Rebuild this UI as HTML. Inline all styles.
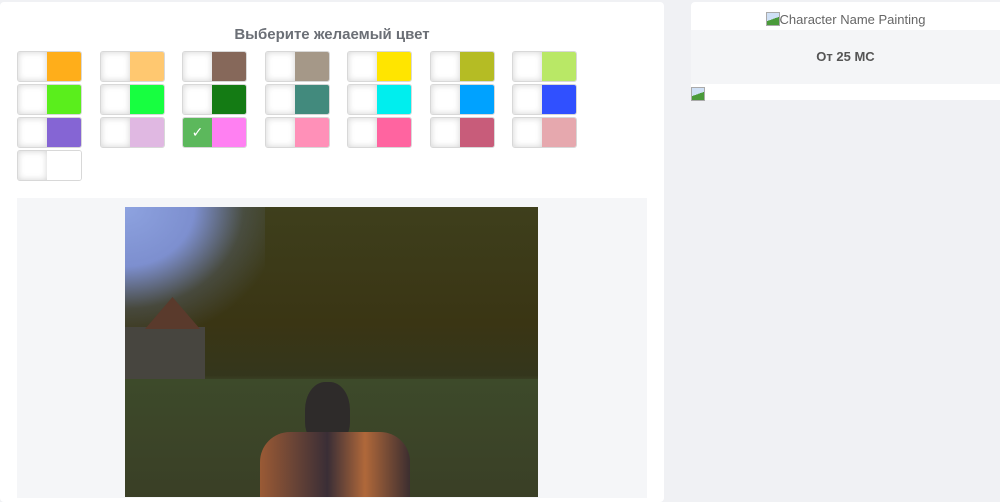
<!DOCTYPE html>
<html><head><meta charset="utf-8"><style>
*{margin:0;padding:0;box-sizing:border-box}
body{width:1000px;height:497px;overflow:hidden;background:#f0f1f4;font-family:"Liberation Sans","DejaVu Sans",sans-serif;position:relative}
.left{position:absolute;left:0;top:2px;width:664px;height:500px;background:#fff;border-radius:4px}
h2{position:absolute;top:24px;left:0;width:664px;text-align:center;font-size:15px;font-weight:bold;color:#6b6f76}
.sw{position:absolute;width:65px;height:31px;border:1px solid #d8d8d8;border-radius:3px;overflow:hidden;background:#fff}
.sw .w{position:absolute;left:0;top:0;width:29px;height:100%;box-shadow:inset 0 0 7px rgba(0,0,0,.18);background:#fff}
.sw .c{position:absolute;left:29px;top:0;right:0;height:100%}
.imgbox{position:absolute;left:17px;top:198px;width:630px;height:300px;background:#f5f6f8}
.pic{position:absolute;left:125px;top:207px;width:413px;height:290px;overflow:hidden;
background:linear-gradient(180deg,#3e3f1c 0%,#3a3514 40%,#34361c 58%,#3b4326 60%,#3a4226 100%)}
.card{position:absolute;left:691px;top:2px;width:309px;height:98px;background:#fff;border-radius:4px 0 0 4px}
.card .t{position:absolute;top:10px;width:100%;text-align:center;font-size:13px;color:#666}
.card .g{position:absolute;top:28px;left:0;width:100%;height:54px;background:#f4f5f7;text-align:center;line-height:54px;font-size:13px;font-weight:bold;color:#555}
.bi{display:inline-block;width:14px;height:14px;border:1px solid #aaa;background:linear-gradient(160deg,#cfe0f5 50%,#4a9a3a 50%);vertical-align:-2px}
</style></head><body>
<div class="left">
<h2>Выберите желаемый цвет</h2>
</div>
<div id="s"></div>
<div class="imgbox"></div>
<div class="pic">
 <div style="position:absolute;left:0;top:0;width:140px;height:120px;background:radial-gradient(ellipse at 0% 0%,#8ea3e0 0%,#7d8fcf 35%,rgba(90,100,120,.4) 60%,transparent 80%)"></div>
 <div style="position:absolute;left:0;top:120px;width:80px;height:70px;background:#47453f"></div>
 <div style="position:absolute;left:20px;top:90px;width:55px;height:32px;background:#5a3a2c;clip-path:polygon(50% 0,100% 100%,0 100%)"></div>
 <div style="position:absolute;left:0;top:172px;width:413px;height:118px;background:linear-gradient(180deg,#3d4a2a,#3a3f26)"></div>
 <div style="position:absolute;left:180px;top:175px;width:45px;height:62px;border-radius:45% 45% 35% 35%;background:#2e2b2a"></div>
 <div style="position:absolute;left:135px;top:225px;width:150px;height:70px;border-radius:30px 30px 0 0;background:linear-gradient(90deg,#9a5a35,#3a2e36 45%,#b0683a 70%,#3c2e30)"></div>
</div>
<div class="card">
 <div class="t"><span class="bi"></span>Character Name Painting</div>
 <div class="g">От 25 МС</div>
 <div style="position:absolute;left:0;top:84px"><span class="bi"></span></div>
</div>
<script>
var cols=[["#ffae1a","#ffc870","#86685a","#a59888","#ffe500","#b5bc24","#b9e866"],
["#5aee1c","#17ff40","#147b14","#428a7d","#00eeee","#00a2ff","#3050ff"],
["#8565d4","#e0b8e2","#ff80f2","#ff90b8","#ff64a0","#c85c7a","#e6a8ae"],
["#ffffff"]];
var xs=[17,100,182,265,347,430,512],ys=[51,84,117,150],h="";
cols.forEach(function(r,i){r.forEach(function(c,j){
var sel=(i==2&&j==2);
h+='<div class="sw" style="left:'+xs[j]+'px;top:'+ys[i]+'px"><div class="w"'+(sel?' style="background:#5cb85c;box-shadow:none;color:#fff;text-align:center;line-height:29px;font-weight:bold;font-size:14px">✓':'>')+'</div><div class="c" style="background:'+c+'"></div></div>';});});
document.getElementById('s').innerHTML=h;
</script>
</body></html>
